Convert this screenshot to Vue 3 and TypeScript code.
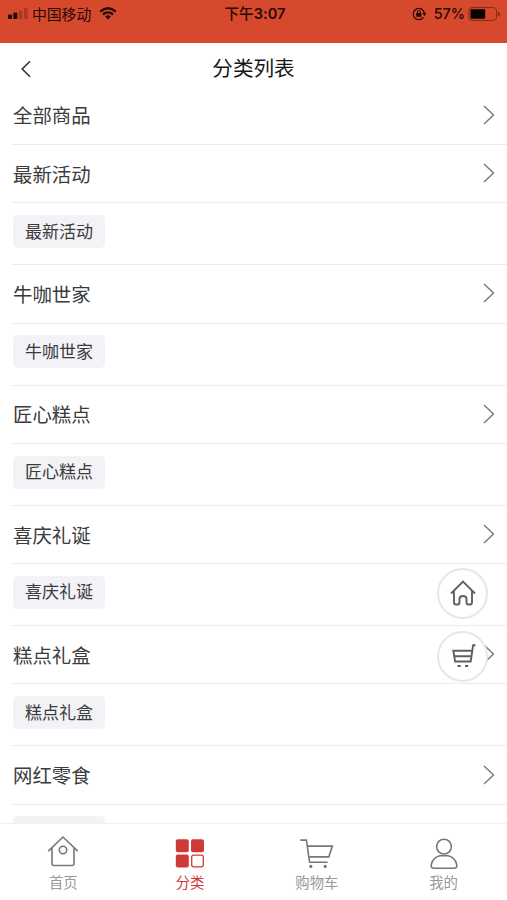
<script setup lang="ts">
interface Category {
  name: string
  children: string[]
}

const categories: Category[] = [
  { name: '全部商品', children: [] },
  { name: '最新活动', children: ['最新活动'] },
  { name: '牛咖世家', children: ['牛咖世家'] },
  { name: '匠心糕点', children: ['匠心糕点'] },
  { name: '喜庆礼诞', children: ['喜庆礼诞'] },
  { name: '糕点礼盒', children: ['糕点礼盒'] },
  { name: '网红零食', children: ['网红零食'] },
]
</script>

<template>
  <div class="phone">
    <header class="status">
      <div class="carrier">
        <svg class="signal" width="21" height="12" viewBox="0 0 21 12">
          <rect x="0" y="6.5" width="4" height="4.5" rx="1" />
          <rect x="5.3" y="4.5" width="4" height="6.5" rx="1" />
          <rect x="10.8" y="2.5" width="3.6" height="8.5" rx="1" opacity=".25" />
          <rect x="16" y="0" width="3.6" height="11" rx="1" opacity=".25" />
        </svg>
        <span class="operator">中国移动</span>
        <svg class="wifi" width="18" height="13" viewBox="0 0 18 13">
          <path d="M1.2 4.6Q9-2 16.8 4.6M3.9 7.5Q9 3.2 14.1 7.5" fill="none" stroke="#260804" stroke-width="2.3" />
          <path d="M6.1 9.4Q9 7 11.9 9.4L9 12.4Z" />
        </svg>
      </div>
      <div class="time">下午<b>3:07</b></div>
      <div class="power">
        <svg width="15" height="14" viewBox="0 0 15 14">
          <path d="M11.4 10.3A5.600 5.600 0 1 1 12.400 6.200" fill="none" stroke="#260804" stroke-width="1.3" />
          <path d="M10.300 6h4.200l-2 3z" />
          <rect x="4.200" y="6" width="5.200" height="3.800" rx=".5" />
          <path d="M5.400 6.200V5a1.400 1.400 0 0 1 2.800 0v1.200" fill="none" stroke="#260804" />
        </svg>
        <span class="percent">57%</span>
        <svg width="33" height="14" viewBox="0 0 33 14">
          <rect x=".9" y=".6" width="27.6" height="12.8" rx="3" fill="none" stroke="#872817" stroke-width="1" />
          <rect x="2.5" y="2.2" width="14.7" height="9.6" rx="1" fill="#090201" />
          <path d="M30 4.5q2 1 2 2.5t-2 2.5z" fill="#872817" />
        </svg>
      </div>
    </header>

    <nav class="navbar">
      <svg class="back" width="12" height="18" viewBox="0 0 12 18"><path d="M10 1.3 2.2 9 10 16.7" /></svg>
      <h1>分类列表</h1>
    </nav>

    <main class="list">
      <section v-for="category in categories" :key="category.name">
        <div class="row">
          <span>{{ category.name }}</span>
          <svg width="12" height="20" viewBox="0 0 12 20"><path d="M1 1 10.5 10 1 19" /></svg>
        </div>
        <div v-if="category.children.length" class="children">
          <span v-for="child in category.children" :key="child" class="chip">{{ child }}</span>
        </div>
      </section>
    </main>

    <div class="floating">
      <button aria-label="首页">
        <svg width="28" height="28" viewBox="0 0 28 28">
          <path d="M2 14.500 14 2.500 26 14.500M5 12v11.500q0 2 2 2h1.500q2 0 2-2v-3.600q0-2.900 3.500-2.900t3.500 2.900v3.600q0 2 2 2H21q2 0 2-2v-11.500" />
        </svg>
      </button>
      <button aria-label="购物车">
        <svg width="28" height="28" viewBox="0 0 28 28">
          <path d="M26.500 3.300h-2.400L21.700 19.500H6.100L4.300 8.700h18.500M5.300 14.300h17M8.500 24h3.200M16 24h3.200" />
        </svg>
      </button>
    </div>

    <footer class="tabs">
      <a class="tab">
        <svg width="34" height="34" viewBox="0 0 34 34">
          <path d="M2.3 17.2 17 3l14.7 14.2M6 13.8v15.7q0 2 2 2h18q2 0 2-2V13.8" /><circle cx="17" cy="16" r="3.7" />
        </svg>
        <span>首页</span>
      </a>
      <a class="tab active">
        <svg width="34" height="34" viewBox="0 0 34 34">
          <g fill="#cf3a38" stroke="none"><rect x="2.8" y="5.2" width="13" height="13" rx="2" /><rect x="18" y="5.2" width="13" height="13" rx="2" /><rect x="2.8" y="20.5" width="13" height="13" rx="2" /></g>
          <rect x="18.7" y="21.2" width="11.6" height="11.6" rx="2" stroke="#cf3a38" stroke-width="1.3" />
        </svg>
        <span>分类</span>
      </a>
      <a class="tab">
        <svg width="34" height="34" viewBox="0 0 34 34">
          <path d="M.3 6.1h6.1l3.2 22.2h18M7.4 12.1h25l-3.6 10.8H9" />
          <g fill="#777" stroke="none"><circle cx="10.8" cy="32.4" r="1.6" /><circle cx="25.2" cy="32.4" r="1.6" /></g>
        </svg>
        <span>购物车</span>
      </a>
      <a class="tab">
        <svg width="34" height="34" viewBox="0 0 34 34">
          <circle cx="17" cy="12.6" r="7.4" />
          <path d="M13 21.800h8C26 22.500 29.500 27 29.800 31.300q.2 3-2.800 3H7q-3 0-2.800-3C4.500 27 8 22.500 13 21.800Z" />
        </svg>
        <span>我的</span>
      </a>
    </footer>
  </div>
</template>

<style>
body { margin: 0; background: #fff; }
</style>

<style scoped>
.phone {
  position: relative;
  display: flex;
  flex-direction: column;
  width: 507px;
  height: 900px;
  overflow: hidden;
  background: #fff;
  color: #3b3b3b;
  font-family: "Liberation Sans", "Noto Sans CJK SC", sans-serif;
}
.status {
  flex: none;
  box-sizing: border-box;
  height: 43.4px;
  display: grid;
  grid-template-columns: 1fr auto 1fr;
  align-items: start;
  padding: 4px 6px 0 8px;
  background: #d7492d;
  color: #260804;
  fill: #260804;
  font-family: Inter, "Noto Sans CJK SC", sans-serif;
  font-size: 14.8px;
  line-height: 20px;
}
.carrier, .power { display: flex; align-items: center; height: 20px; }
.operator { margin: 1px 8px 0 3px; }
.wifi { margin-top: -1px; }
.time { padding-left: 1px; white-space: nowrap; font-weight: 500; font-size: 14.5px; letter-spacing: .1px; }
.time b { font-weight: 600; }
.power { justify-content: flex-end; }
.power svg { margin-top: -1px; }
.percent { margin: 0 3px 0 7px; font-weight: 500; font-size: 14.3px; }
.navbar {
  flex: none;
  box-sizing: border-box;
  height: 43.2px;
  padding-top: 8px;
  display: grid;
  grid-template-columns: 1fr auto 1fr;
  align-items: center;
}
.back { margin-left: 20px; fill: none; stroke: #333; stroke-width: 1.6; }
h1 { margin: 0; color: #171717; font-size: 20.6px; line-height: 30px; font-weight: 400; }
.list { flex: 1; min-height: 0; overflow: hidden; padding-left: 12px; }
.row {
  box-sizing: border-box;
  height: 58.4px;
  display: flex;
  align-items: center;
  justify-content: space-between;
  padding: 0 12px 1px 1px;
  border-bottom: 1px solid #ececec;
  font-size: 19.4px;
}
.row svg { fill: none; stroke: #777; stroke-width: 1.4; }
.children {
  box-sizing: border-box;
  height: 61.9px;
  padding: 11.6px 1px;
  border-bottom: 1px solid #ececec;
}
.chip {
  display: block;
  box-sizing: border-box;
  width: max-content;
  height: 33px;
  padding: .6px 12px 0;
  border-radius: 5px;
  background: #f2f2f7;
  font-size: 17px;
  line-height: 33px;
}
.floating {
  position: absolute;
  right: 19px;
  top: 567.5px;
  display: grid;
  gap: 12px;
}
.floating button {
  display: grid;
  place-items: center;
  box-sizing: border-box;
  width: 51px;
  height: 51px;
  padding: 0;
  border: 2px solid #e7e7e7;
  border-radius: 50%;
  background: #fff;
}
.floating svg { fill: none; stroke: #606060; stroke-width: 1.9; }
.tabs {
  flex: none;
  box-sizing: border-box;
  height: 77px;
  display: grid;
  grid-template-columns: repeat(4, 1fr);
  border-top: 1px solid #f0f0f0;
  background: #fff;
}
.tab {
  display: flex;
  flex-direction: column;
  align-items: center;
  padding-top: 10px;
  color: #999;
  font-size: 14.4px;
  line-height: 20px;
}
.tab svg { fill: none; stroke: #777; stroke-width: 1.6; overflow: visible; }
.tab span { margin-top: 5px; }
.active { color: #cf3a38; }
</style>
